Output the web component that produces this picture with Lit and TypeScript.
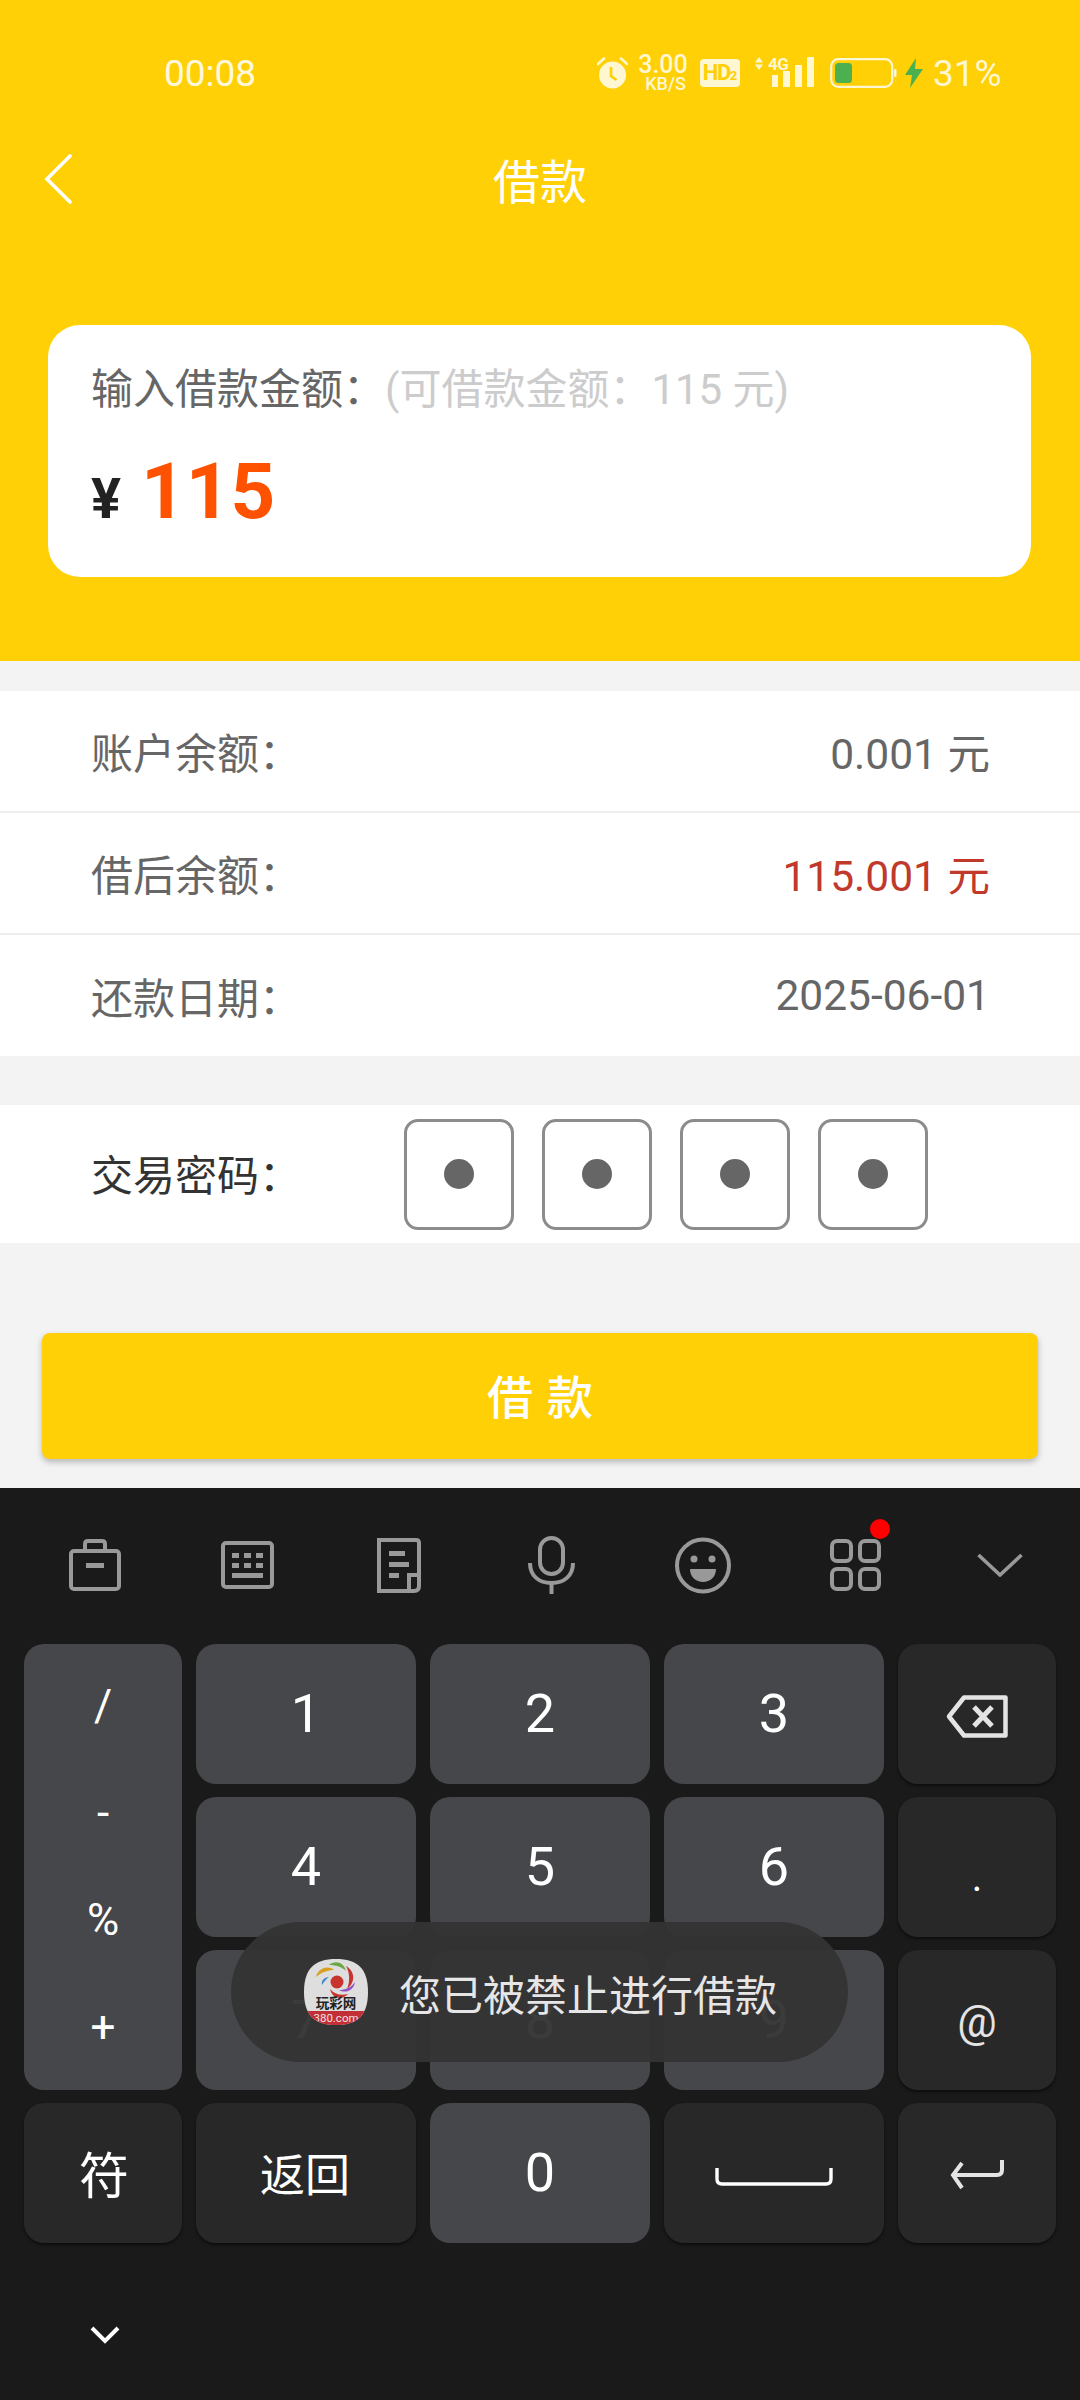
import {html, css, LitElement} from 'lit';
import {customElement} from 'lit/decorators.js';

const infoRows = [
  {label: '账户余额：', value: '0.001 元', red: false},
  {label: '借后余额：', value: '115.001 元', red: true},
  {label: '还款日期：', value: '2025-06-01', red: false}
];

const alarmIcon = html`<svg class="alarm" width="31" height="32" viewBox="0 0 31 32">
  <circle cx="15.5" cy="18" r="13.5" fill="#fff6d2"/>
  <path d="M1 7 L7 1.5 M30 7 L24 1.5" stroke="#fff6d2" stroke-width="2.6" stroke-linecap="round"/>
  <path d="M14 10 V19 L19.5 23" stroke="#ffd006" stroke-width="2.6" fill="none"/>
</svg>`;

const signalIcon = html`<svg class="signal" width="60" height="40" viewBox="0 -4 60 40">
  <path d="M0 5.5 L4 0 L8 5.5 Z M0 7.5 L8 7.5 L4 13 Z" fill="#fff6d2"/>
  <rect x="17" y="18" width="6" height="12" fill="#fff6d2"/>
  <rect x="28" y="14" width="7" height="16" fill="#fff6d2"/>
  <rect x="40" y="8" width="7" height="22" fill="#fff6d2"/>
  <rect x="52" y="0" width="7" height="30" fill="#fff6d2"/>
  <text x="13" y="12.5" font-family="Roboto" font-size="17" font-weight="700" letter-spacing="-0.5" fill="#fff6d2">4G</text>
</svg>`;

const batteryIcon = html`<svg class="battery" width="67" height="30" viewBox="0 0 67 30">
  <rect x="1.2" y="1.2" width="61" height="27.6" rx="7" fill="none" stroke="#fff6d2" stroke-width="2.2"/>
  <rect x="5" y="5" width="17" height="20" rx="3.5" fill="#4caf50"/>
  <rect x="64" y="11" width="2.5" height="8" rx="1" fill="#fff6d2"/>
</svg>`;

const boltIcon = html`<svg class="bolt" width="18" height="30" viewBox="0 0 18 30">
  <path d="M11 0 L0 17 H7 L5 30 L18 11 H10 Z" fill="#4caf50"/>
</svg>`;

const backIcon = html`<svg width="28" height="50" viewBox="0 0 28 50">
  <path d="M26 2 L3 25 L26 48" fill="none" stroke="#fff" stroke-width="3.6" stroke-linecap="round"/>
</svg>`;

const toolIcons = [
  html`<svg width="52" height="52" viewBox="0 0 52 52" fill="none" stroke="#999" stroke-width="4">
    <rect x="2" y="12" width="48" height="38" rx="3"/>
    <path d="M16 11 V5 Q16 2 19 2 H33 Q36 2 36 5 V11"/>
    <rect x="17" y="24" width="18" height="5" fill="#999" stroke="none"/>
  </svg>`,
  html`<svg width="53" height="48" viewBox="0 0 53 48" fill="none" stroke="#999" stroke-width="4">
    <rect x="2" y="2" width="49" height="44" rx="3"/>
    <g fill="#999" stroke="none">
      <rect x="11" y="12" width="7" height="5"/><rect x="23" y="12" width="7" height="5"/><rect x="35" y="12" width="7" height="5"/>
      <rect x="11" y="22" width="7" height="5"/><rect x="23" y="22" width="7" height="5"/><rect x="35" y="22" width="7" height="5"/>
      <rect x="11" y="32" width="31" height="5"/>
    </g>
  </svg>`,
  html`<svg width="44" height="55" viewBox="0 0 44 55" fill="none" stroke="#999" stroke-width="4">
    <path d="M2 2 H39 Q42 2 42 5 V48 Q42 53 37 53 H2 Z"/>
    <path d="M42 37 H32 V53"/>
    <g fill="#999" stroke="none">
      <rect x="12" y="13" width="16" height="5"/><rect x="12" y="24" width="20" height="5"/><rect x="12" y="35" width="10" height="5"/>
    </g>
  </svg>`,
  html`<svg width="47" height="58" viewBox="0 0 47 58" fill="none" stroke="#999" stroke-width="4">
    <rect x="12" y="2" width="23" height="36" rx="11.5"/>
    <path d="M2 27 C2 40 11 47 23.5 47 C36 47 45 40 45 27"/>
    <path d="M23.5 47 V58"/>
  </svg>`,
  html`<svg width="56" height="57" viewBox="0 0 56 57" fill="none" stroke="#999" stroke-width="4">
    <circle cx="28" cy="28.5" r="26"/>
    <g fill="#999" stroke="none">
      <circle cx="19" cy="22" r="3.5"/><circle cx="37" cy="22" r="3.5"/>
      <path d="M15 32 H41 C41 40 35 45 28 45 C21 45 15 40 15 32 Z"/>
    </g>
  </svg>`,
  html`<svg width="51" height="52" viewBox="0 0 51 52" fill="none" stroke="#999" stroke-width="4">
    <rect x="2" y="2" width="19" height="20" rx="5"/><rect x="30" y="2" width="19" height="20" rx="5"/>
    <rect x="2" y="30" width="19" height="20" rx="5"/><rect x="30" y="30" width="19" height="20" rx="5"/>
  </svg>`,
  html`<svg width="46" height="23" viewBox="0 0 46 23" fill="none" stroke="#999" stroke-width="3.6">
    <path d="M1.5 1 L23 21 L44.5 1"/>
  </svg>`
];

const backspaceIcon = html`<svg width="62" height="43" viewBox="0 0 62 43" fill="none" stroke="#e4e4e4" stroke-width="4.5" stroke-linejoin="round">
  <path d="M18 2.5 H59.5 V40.5 H18 L3 21.5 Z"/>
  <path d="M28 12 L46 31 M46 12 L28 31" stroke-width="5"/>
</svg>`;

const spaceIcon = html`<svg width="118" height="18" viewBox="0 0 118 18" fill="none" stroke="#fff" stroke-width="3.4">
  <path d="M2 0 V11 Q2 16 7 16 H111 Q116 16 116 11 V0"/>
</svg>`;

const enterIcon = html`<svg width="54" height="30" viewBox="0 0 54 30" fill="none" stroke="#e4e4e4" stroke-width="4">
  <path d="M52 0 V10 Q52 15 47 15 H5"/>
  <path d="M12 3 L3 15 L12 28"/>
</svg>`;

const downIcon = html`<svg width="30" height="18" viewBox="0 0 30 18" fill="none" stroke="#fff" stroke-width="4">
  <path d="M2 2 L15 15 L28 2"/>
</svg>`;

// app icon of the toast, a squircle with the coloured pinwheel
const logoIcon = html`<svg width="64" height="66" viewBox="0 0 64 66">
  <defs><clipPath id="sq"><path d="M32 0 C54 0 64 10 64 33 C64 56 54 66 32 66 C10 66 0 56 0 33 C0 10 10 0 32 0 Z"/></clipPath></defs>
  <g clip-path="url(#sq)">
    <rect width="64" height="66" fill="#dedede"/>
    <rect y="52" width="64" height="14" fill="#c22f36"/>
    <path d="M12 18 C14 9 24 6 30 11 C24 11 18 13 12 18 Z" fill="#d8a022"/>
    <path d="M25 6 C31 1 40 3 42 12 C38 8 32 6 25 6 Z" fill="#6da644"/>
    <path d="M42 7 C51 12 52 23 43 30 C46 23 46 14 42 7 Z" fill="#c8352f"/>
    <path d="M51 23 C50 31 42 35 35 31 C41 31 47 29 51 23 Z" fill="#9450c4"/>
    <path d="M44 35 C37 42 28 39 26 30 C30 35 37 37 44 35 Z" fill="#c8352f"/>
    <path d="M18 26 C17 22 20 18 25 18 C22 20 20 23 18 26 Z" fill="#3f88c9"/>
    <circle cx="33" cy="23" r="6.5" fill="#c8352f"/>
    <text x="32" y="49" text-anchor="middle" font-family="Noto Sans CJK SC" font-size="13.5" font-weight="700" fill="#222">玩彩网</text>
    <text x="32" y="63" text-anchor="middle" font-family="Roboto" font-size="11.5" fill="#f0e0e0">380.com</text>
  </g>
</svg>`;

@customElement('app-root')
export class AppRoot extends LitElement {
  static styles = css`
    :host {
      display: block;
      position: relative;
      width: 1080px;
      height: 2400px;
      overflow: hidden;
      background: #f3f3f3;
      font-family: Roboto, 'Noto Sans CJK SC', sans-serif;
    }
    .head {
      height: 661px;
      background: #ffd006;
      overflow: hidden;
    }
    .status {
      height: 146px;
      display: flex;
      align-items: center;
      padding-left: 164px;
      color: #fff8dc;
    }
    .time {
      font-size: 37px;
      width: 433px;
    }
    .alarm {
      margin-top: -1px;
    }
    .speed {
      width: 52px;
      margin-left: 9px;
      padding-top: 1px;
      text-align: center;
      font-weight: 500;
      color: #fff6d2;
    }
    .speed b {
      display: block;
      font-size: 25px;
      font-weight: 500;
      height: 17px;
      line-height: 17px;
    }
    .speed i {
      display: block;
      font-style: normal;
      font-size: 18px;
      height: 16px;
      line-height: 16px;
      margin-top: 3px;
      margin-left: 5px;
      white-space: nowrap;
    }
    .hd {
      width: 40px;
      height: 28px;
      margin-left: 11px;
      border-radius: 4px;
      background: #fff6d2;
      color: #ffd006;
      font-size: 22px;
      font-weight: 700;
      line-height: 28px;
      text-align: center;
      letter-spacing: -1.5px;
      white-space: nowrap;
    }
    .hd small {
      font-size: 13px;
      letter-spacing: 0;
    }
    .signal {
      margin-left: 15px;
    }
    .battery {
      margin-left: 15px;
    }
    .bolt {
      margin-left: 8px;
    }
    .pct {
      margin-left: 10px;
      font-size: 37px;
      color: #fff6d2;
    }
    .nav {
      height: 68px;
      box-sizing: border-box;
      padding-bottom: 4px;
      position: relative;
      display: flex;
      align-items: center;
      justify-content: center;
      color: #fff;
      font-size: 47px;
    }
    .back {
      position: absolute;
      left: 44px;
      top: 8px;
    }
    .card {
      margin: 111px 49px 0 48px;
      height: 252px;
      box-sizing: border-box;
      padding: 36px 43px 0;
      background: #fff;
      border-radius: 32px;
    }
    .card-label {
      font-size: 42px;
      line-height: 58px;
      color: #666;
      white-space: nowrap;
    }
    .card-label span {
      color: #ccc;
    }
    .amount {
      display: flex;
      align-items: baseline;
      margin-top: 28px;
      font-weight: 700;
    }
    .amount .yen {
      font-size: 56px;
      color: #222;
      width: 50px;
    }
    .amount .num {
      font-size: 78px;
      line-height: 90px;
      color: #ff5200;
    }
    .info {
      margin-top: 30px;
      background: #fff;
    }
    .row {
      height: 122px;
      box-sizing: border-box;
      display: flex;
      align-items: center;
      justify-content: space-between;
      padding: 0 90px 2px 91px;
      font-size: 42.5px;
      color: #666;
      border-bottom: 2px solid #eee;
    }
    .row span:first-child {
      font-size: 42px;
    }
    .row:last-child {
      height: 121px;
      padding-bottom: 0;
      border-bottom: none;
    }
    .row .red {
      color: #c0392b;
    }
    .pwd {
      margin-top: 49px;
      height: 138px;
      display: flex;
      align-items: center;
      padding-left: 91px;
      background: #fff;
    }
    .pwd-label {
      width: 313px;
      font-size: 42px;
      color: #333;
      margin-top: -3px;
    }
    .boxes {
      display: flex;
      gap: 28px;
    }
    .box {
      width: 110px;
      height: 111px;
      box-sizing: border-box;
      border: 3px solid #8c8c8c;
      border-radius: 14px;
      display: flex;
      align-items: center;
      justify-content: center;
    }
    .box::after {
      content: '';
      width: 30px;
      height: 30px;
      border-radius: 50%;
      background: #666;
    }
    .submit {
      margin: 90px 42px 0;
      height: 126px;
      padding-bottom: 4px;
      box-sizing: border-box;
      display: flex;
      align-items: center;
      justify-content: center;
      background: #ffd006;
      border-radius: 8px;
      box-shadow: 0 3px 6px rgba(0, 0, 0, 0.25);
      color: #fff;
      font-size: 46px;
      font-weight: 500;
      letter-spacing: 14px;
      text-indent: 14px;
    }
    .kb {
      margin-top: 29px;
      height: 912px;
      background: #1a1a1a;
    }
    .tools {
      height: 156px;
      display: grid;
      grid-template-columns: repeat(7, 152px);
      padding-left: 19px;
      align-items: start;
      justify-items: center;
      padding-top: 48px;
      box-sizing: border-box;
    }
    .tool {
      position: relative;
      height: 58px;
      display: flex;
      align-items: center;
    }
    .tool.last {
      margin-left: -14px;
    }
    .tool .dot {
      position: absolute;
      right: -9px;
      top: -17px;
      width: 20px;
      height: 20px;
      border-radius: 50%;
      background: #f00;
    }
    .keys {
      display: grid;
      grid-template-columns: 158px 220px 220px 220px 158px;
      grid-auto-rows: 140px;
      gap: 13px 14px;
      padding: 0 25px 0 24px;
    }
    .key {
      display: flex;
      align-items: center;
      justify-content: center;
      padding-bottom: 2px;
      box-sizing: border-box;
      border-radius: 20px;
      background: #282828;
      box-shadow: 0 2px 3px rgba(0, 0, 0, 0.5);
      color: #fff;
      font-size: 54px;
    }
    .key.light {
      background: #46474a;
      box-shadow: none;
    }
    .key.sym {
      grid-row: span 3;
      flex-direction: column;
      font-size: 44px;
    }
    .key.sym span {
      height: 107px;
      display: flex;
      align-items: center;
    }
    .key.icon {
      padding: 4px 0 0;
    }
    .key.space {
      padding: 7px 0 0;
    }
    .key.dot-key {
      font-size: 40px;
      padding: 20px 0 0;
    }
    .key.at {
      font-size: 44px;
      color: #e4e4e4;
      padding: 4px 0 0;
    }
    .key.cjk {
      font-size: 45px;
      padding-right: 2px;
    }
    .key.fu {
      font-size: 50px;
      padding-left: 2px;
    }
    .kb-foot {
      height: 157px;
      padding-left: 90px;
      display: flex;
      align-items: center;
      padding-top: 27px;
      box-sizing: border-box;
    }
    .toast {
      position: absolute;
      left: 231px;
      top: 1922px;
      width: 617px;
      height: 140px;
      box-sizing: border-box;
      padding-left: 73px;
      display: flex;
      align-items: center;
      gap: 31px;
      border-radius: 70px;
      background: rgba(51, 51, 51, 0.96);
      color: #e6e6e6;
      font-size: 42px;
      white-space: nowrap;
    }
  `;

  render() {
    return html`
      <div class="head">
        <div class="status">
          <span class="time">00:08</span>
          ${alarmIcon}
          <span class="speed"><b>3.00</b><i>KB/S</i></span>
          <span class="hd">HD<small>2</small></span>
          ${signalIcon}
          ${batteryIcon}
          ${boltIcon}
          <span class="pct">31%</span>
        </div>
        <div class="nav">
          <span class="back">${backIcon}</span>
          借款
        </div>
        <div class="card">
          <div class="card-label">输入借款金额：<span>(可借款金额：115 元)</span></div>
          <div class="amount"><span class="yen">¥</span><span class="num">115</span></div>
        </div>
      </div>

      <div class="info">
        ${infoRows.map(r => html`
          <div class="row">
            <span>${r.label}</span>
            <span class=${r.red ? 'red' : ''}>${r.value}</span>
          </div>
        `)}
      </div>

      <div class="pwd">
        <span class="pwd-label">交易密码：</span>
        <div class="boxes">
          <div class="box"></div><div class="box"></div><div class="box"></div><div class="box"></div>
        </div>
      </div>

      <div class="submit">借款</div>

      <div class="kb">
        <div class="tools">
          ${toolIcons.map((icon, idx) => html`
            <div class="tool ${idx === 6 ? 'last' : ''}">
              ${icon}
              ${idx === 5 ? html`<span class="dot"></span>` : ''}
            </div>
          `)}
        </div>
        <div class="keys">
          <div class="key light sym"><span>/</span><span>-</span><span>%</span><span>+</span></div>
          <div class="key light">1</div>
          <div class="key light">2</div>
          <div class="key light">3</div>
          <div class="key icon">${backspaceIcon}</div>
          <div class="key light">4</div>
          <div class="key light">5</div>
          <div class="key light">6</div>
          <div class="key dot-key">.</div>
          <div class="key light">7</div>
          <div class="key light">8</div>
          <div class="key light">9</div>
          <div class="key at">@</div>
          <div class="key fu">符</div>
          <div class="key cjk">返回</div>
          <div class="key light">0</div>
          <div class="key space">${spaceIcon}</div>
          <div class="key icon">${enterIcon}</div>
        </div>
        <div class="kb-foot">${downIcon}</div>
      </div>

      <div class="toast">${logoIcon}<span>您已被禁止进行借款</span></div>
    `;
  }
}
